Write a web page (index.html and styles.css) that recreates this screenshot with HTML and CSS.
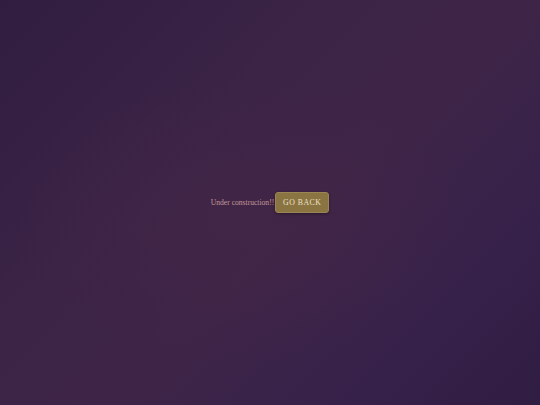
FILE: index.html
```html
<!DOCTYPE html>
<html>
<head>
<meta charset="utf-8">
<link rel="stylesheet" href="styles.css">
</head>
<body>
<main class="page">
  <div class="row">
    <span class="msg">Under construction!!</span>
    <button class="back">GO BACK</button>
  </div>
</main>
</body>
</html>
```
FILE: styles.css
```css
html, body {
  margin: 0;
  height: 100%;
}
body {
  background: #3a2444;
  font-family: "Liberation Serif", "Times New Roman", serif;
}
.page {
  height: 100%;
  display: flex;
  align-items: center;
  justify-content: center;
  background:
    radial-gradient(ellipse 60% 50% at 45% 55%, rgba(70,38,70,0.5), rgba(0,0,0,0) 70%),
    linear-gradient(135deg, #301d40 0%, #3b2446 35%, #3e2547 55%, #36214a 80%, #301d42 100%);
}
.row {
  display: flex;
  align-items: center;
  gap: 1px;
}
.msg {
  color: #c39a98;
  font-size: 7.6px;
}
.back {
  background: #8a7442;
  color: #eee2c8;
  border: 1px solid #9a8554;
  border-radius: 3px;
  font-family: "Liberation Serif", "Times New Roman", serif;
  font-size: 7.8px;
  letter-spacing: 0.5px;
  width: 54px;
  height: 21px;
  padding: 0;
  box-shadow: 0 1px 3px rgba(0,0,0,0.35);
}
```
